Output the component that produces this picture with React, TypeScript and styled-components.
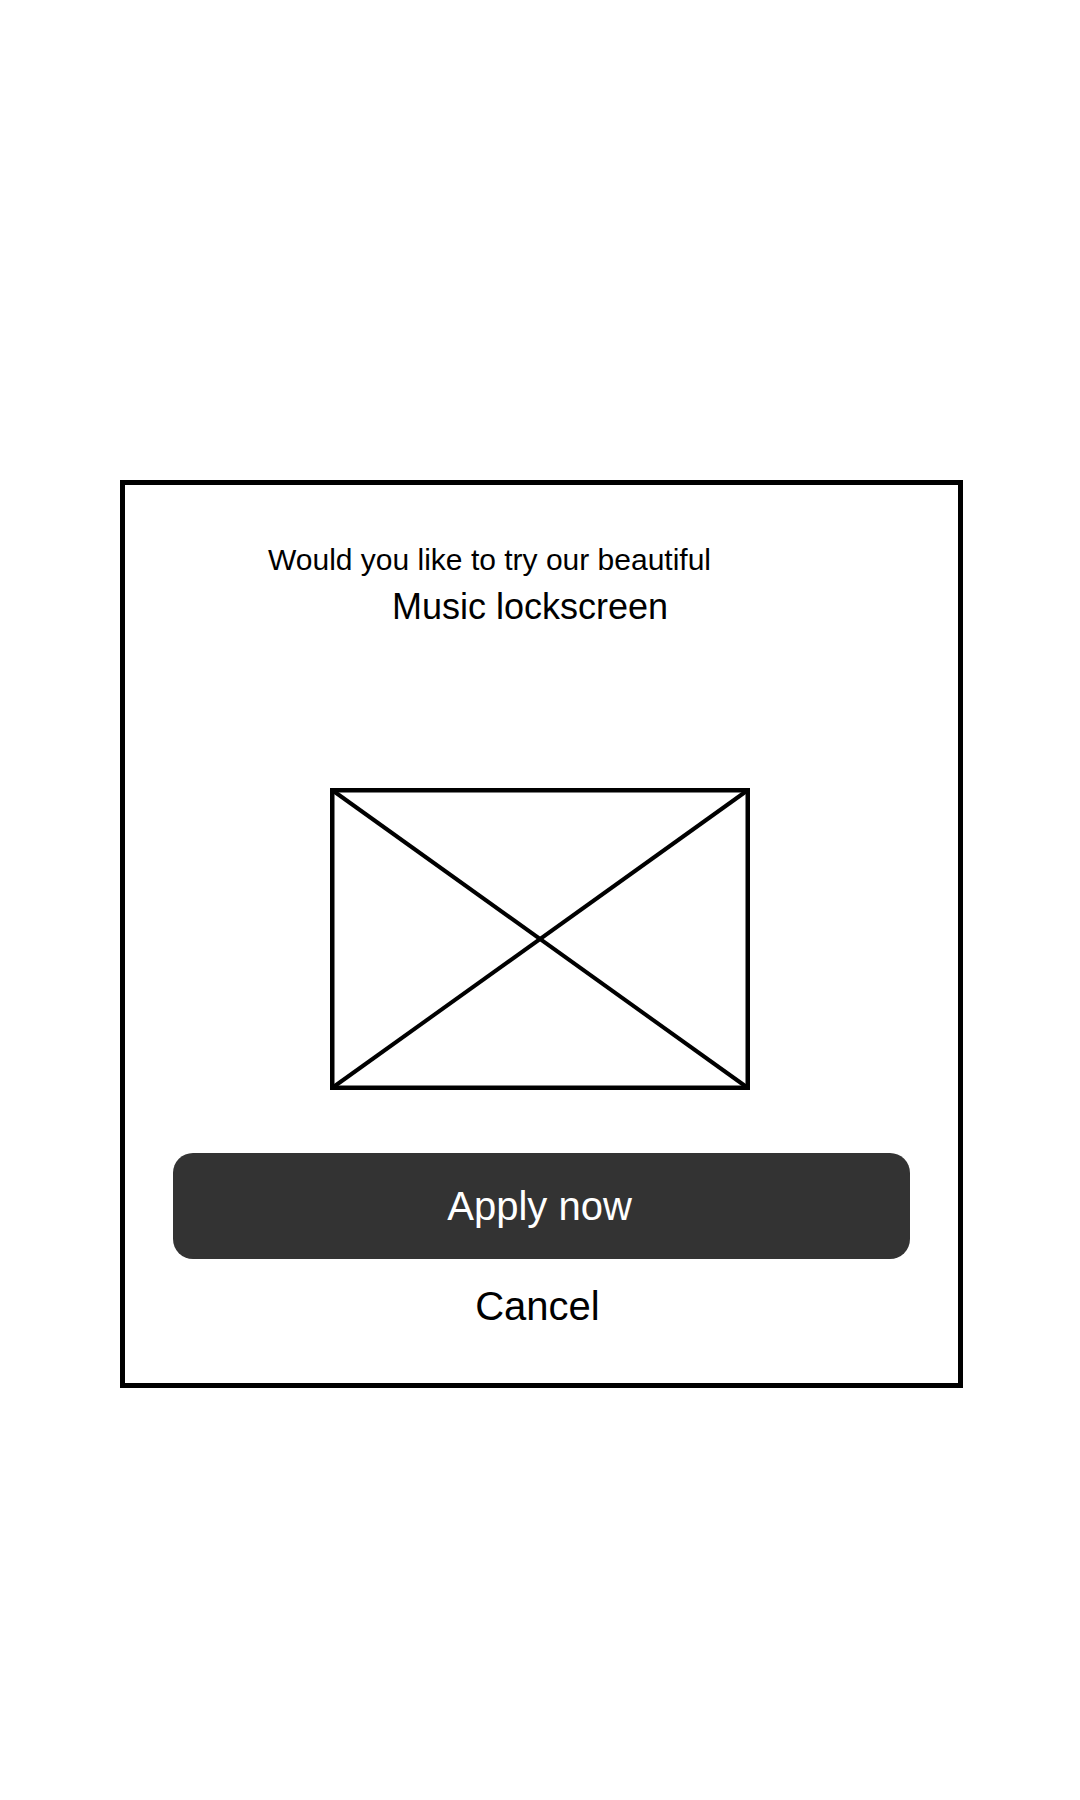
import styled, { createGlobalStyle } from "styled-components";

const GlobalStyle = createGlobalStyle`
	html, body {
		margin: 0;
		padding: 0;
		background: #ffffff;
	}

	body {
		font-family: "Liberation Sans", Arial, sans-serif;
		color: #000000;
	}
`

const ImagePlaceholder = () => {
	return (
		<StyledPlaceholder width="420" height="302" viewBox="0 0 420 302">
			<rect x="2.25" y="2.25" width="415.5" height="297.5" fill="none" stroke="#000" strokeWidth="4.5"/>
			<line x1="2" y1="2" x2="418" y2="300" stroke="#000" strokeWidth="4"/>
			<line x1="418" y1="2" x2="2" y2="300" stroke="#000" strokeWidth="4"/>
		</StyledPlaceholder>
	)
}

const App = () => {
	return (
		<>
			<GlobalStyle/>
			<StyledPage>
				<StyledDialog>
					<StyledTitle size={30} lineHeight={36} indent={143}>
						Would you like to try our beautiful
					</StyledTitle>
					<StyledTitle size={36} lineHeight={40} indent={267} gap={9}>
						Music lockscreen
					</StyledTitle>
					<StyledPreview>
						<ImagePlaceholder/>
					</StyledPreview>
					<StyledApplyButton type="button">Apply now</StyledApplyButton>
					<StyledCancel type="button">Cancel</StyledCancel>
				</StyledDialog>
			</StyledPage>
		</>
	)
}

const StyledPage = styled.div`
	padding-top: 480px;
	padding-left: 120px;
	min-height: 1800px;
	box-sizing: border-box;
`

const StyledDialog = styled.div`
	width: 843px;
	box-sizing: border-box;
	border: 5px solid #000000;
	padding: 57px 0 54px;
	display: flex;
	flex-direction: column;
`

const StyledTitle = styled.div<{ size: number; lineHeight: number; indent: number; gap?: number }>`
	font-size: ${p => p.size}px;
	line-height: ${p => p.lineHeight}px;
	padding-left: ${p => p.indent}px;
	margin-top: ${p => p.gap ?? 0}px;
	color: #000000;
	white-space: nowrap;
`

const StyledPreview = styled.div`
	display: flex;
	justify-content: center;
	margin-top: 161px;
	padding-right: 4px;
`

const StyledPlaceholder = styled.svg`
	display: block;
`

const StyledApplyButton = styled.button`
	margin: 63px 48px 0;
	padding: 0 4px 0 0;
	height: 106px;
	border: none;
	border-radius: 20px;
	background: #333333;
	color: #ffffff;
	font-family: "Liberation Sans", Arial, sans-serif;
	font-size: 40px;
	display: flex;
	align-items: center;
	justify-content: center;
	cursor: pointer;
`

const StyledCancel = styled.button`
	margin-top: 24px;
	padding: 0 8px 0 0;
	border: none;
	background: none;
	color: #000000;
	font-family: "Liberation Sans", Arial, sans-serif;
	font-size: 40px;
	line-height: 46px;
	text-align: center;
	cursor: pointer;
`

export default App;
